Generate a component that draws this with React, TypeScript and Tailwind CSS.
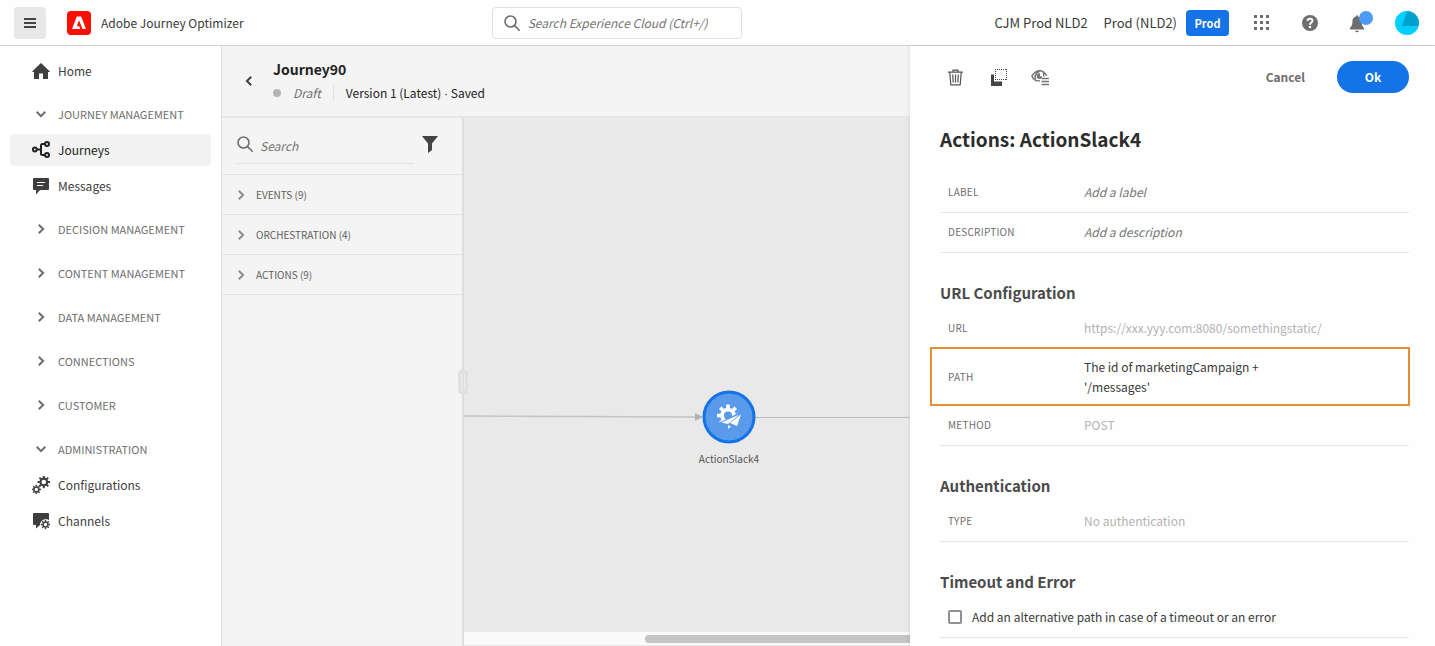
import type { ReactNode } from "react";

type NavItem = { label: string; icon: ReactNode; active?: boolean };
type NavSection = { label: string; open?: boolean; items?: NavItem[] };

const TEETH = [0, 45, 90, 135, 180, 225, 270, 315];

function Gear({ x, y, r, color = "currentColor" }: { x: number; y: number; r: number; color?: string }) {
  return (
    <g transform={`translate(${x} ${y})`}>
      <circle r={r * 0.54} fill="none" stroke={color} strokeWidth={r * 0.34} />
      {TEETH.map((a) => (
        <rect key={a} x={-r * 0.16} y={-r} width={r * 0.32} height={r * 0.36} fill={color} transform={`rotate(${a})`} />
      ))}
    </g>
  );
}

function HomeIcon() {
  return (
    <svg width="18" height="18" viewBox="0 0 18 18" fill="currentColor" aria-hidden="true">
      <path d="M9 1 0.400 9.300c-.3.4-.1.7.3.7H2v6.400c0 .3.2.6.6.6H7v-5.500h4V17h4.400c.4 0 .6-.3.6-.6V10h1.300c.4 0 .6-.3.3-.7Z" />
    </svg>
  );
}

function JourneysIcon() {
  return (
    <svg width="18" height="18" viewBox="0 0 18 18" fill="none" stroke="currentColor" strokeWidth="2" aria-hidden="true">
      <circle cx="2.800" cy="8.500" r="1.900" />
      <circle cx="15" cy="3" r="2" />
      <circle cx="15" cy="14" r="2" />
      <path d="M5 8.500h4M13 3h-2.500Q9 3 9 4.500v8q0 1.500 1.500 1.500H13" />
    </svg>
  );
}

function MessagesIcon() {
  return (
    <svg width="18" height="18" viewBox="0 0 18 18" aria-hidden="true">
      <path fill="currentColor" d="M2 1h14a1 1 0 0 1 1 1v10a1 1 0 0 1-1 1H8l-4 4.500V13H2a1 1 0 0 1-1-1V2a1 1 0 0 1 1-1Z" />
      <path stroke="#fff" d="M5 5.500h8M5 8.500h6" />
    </svg>
  );
}

function GearsIcon() {
  return (
    <svg width="18" height="18" viewBox="0 0 18 18" aria-hidden="true">
      <Gear x={11.8} y={6} r={6.2} />
      <Gear x={4.4} y={13.4} r={4.6} />
    </svg>
  );
}

function ChannelsIcon() {
  return (
    <svg width="18" height="18" viewBox="0 0 18 18" aria-hidden="true">
      <path fill="currentColor" d="M2 1h14a1 1 0 0 1 1 1v6A6 6 0 0 0 8 13l-4 3.600V13H2a1 1 0 0 1-1-1V2a1 1 0 0 1 1-1Z" />
      <circle cx="13.500" cy="12.500" r="5" fill="#fff" />
      <Gear x={13.5} y={12.5} r={4.6} />
    </svg>
  );
}

function Chevron({ dir }: { dir: "down" | "right" | "left" }) {
  const d = { down: "M.7 2.800 5 7.100l4.300-4.300", right: "M2.800.7 7.100 5 2.800 9.300", left: "M7.200.7 2.900 5l4.300 4.300" }[dir];
  return (
    <svg width="10" height="10" viewBox="0 0 10 10" fill="none" stroke="currentColor" strokeWidth="2" aria-hidden="true">
      <path d={d} />
    </svg>
  );
}

function SearchIcon() {
  return (
    <svg width="16" height="16" viewBox="0 0 16 16" fill="none" stroke="currentColor" strokeWidth="1.600" strokeLinecap="round" aria-hidden="true">
      <circle cx="6.500" cy="6.500" r="5.500" />
      <path d="m10.600 10.600 4.600 4.600" />
    </svg>
  );
}

const sections: NavSection[] = [
  {
    label: "JOURNEY MANAGEMENT",
    open: true,
    items: [
      { label: "Journeys", icon: <JourneysIcon />, active: true },
      { label: "Messages", icon: <MessagesIcon /> },
    ],
  },
  { label: "DECISION MANAGEMENT" },
  { label: "CONTENT MANAGEMENT" },
  { label: "DATA MANAGEMENT" },
  { label: "CONNECTIONS" },
  { label: "CUSTOMER" },
  {
    label: "ADMINISTRATION",
    open: true,
    items: [
      { label: "Configurations", icon: <GearsIcon /> },
      { label: "Channels", icon: <ChannelsIcon /> },
    ],
  },
];

function NavLink({ label, icon, active }: NavItem) {
  return (
    <a
      href="#"
      aria-current={active ? "page" : undefined}
      className={
        active
          ? "flex h-8 items-center gap-2 rounded bg-[#f2f2f2] pl-[22px] text-[#222]"
          : "flex h-8 items-center gap-2 rounded pl-[22px] text-[#3e3e3e]"
      }
    >
      {icon}
      {label}
    </a>
  );
}

function TopBar() {
  return (
    <header className="flex h-[46px] shrink-0 items-center border-b border-[#cfcfcf] bg-[#fefefe] pl-3.5 pr-4">
      <div className="flex w-[34%] items-center">
        <button type="button" aria-label="Menu" className="flex size-8 items-center justify-center rounded bg-[#e8e8e8]">
          <svg width="12" height="10" viewBox="0 0 12 10" fill="#444" aria-hidden="true">
            <path d="M0 0h12v2H0zM0 4h12v2H0zM0 8h12v2H0z" />
          </svg>
        </button>
        <svg className="ml-[21px]" width="24" height="24" viewBox="0 0 24 24" aria-hidden="true">
          <rect width="24" height="24" rx="4" fill="#fa0f00" />
          <path fill="#fff" d="M9.800 5.500h4.400L19 18h-3.500L12 9.300l-2.300 6h2.600l1 2.700H5Z" />
        </svg>
        <span className="ml-2.5">Adobe Journey Optimizer</span>
      </div>
      <label className="flex h-8 w-[250px] items-center gap-2 rounded border border-[#e1e1e1] px-[11px] text-[#6e6e6e]">
        <SearchIcon />
        <input
          type="search"
          aria-label="Search Experience Cloud"
          placeholder="Search Experience Cloud (Ctrl+/)"
          className="min-w-0 flex-1 bg-transparent italic outline-none placeholder:text-[#757575]"
        />
      </label>
      <div className="flex flex-1 items-center justify-end">
        <span className="text-[13px]">CJM Prod NLD2</span>
        <span className="ml-4 text-[13px]">Prod (NLD2)</span>
        <button type="button" className="ml-[9px] h-[26px] w-[43px] rounded bg-[#1473e6] text-[11px] font-bold text-white">
          Prod
        </button>
        <button type="button" aria-label="Apps" className="ml-[25px]">
          <svg width="15" height="15" viewBox="0 0 15 15" fill="#6e6e6e" aria-hidden="true">
            {[0, 6, 12].map((y) => [0, 6, 12].map((x) => <rect key={`${x}-${y}`} x={x} y={y} width="3" height="3" />))}
          </svg>
        </button>
        <button type="button" aria-label="Help" className="ml-[33px]">
          <svg width="16" height="16" viewBox="0 0 16 16" aria-hidden="true">
            <circle cx="8" cy="8" r="8" fill="#6e6e6e" />
            <path d="M5.500 5.900Q5.600 3.800 8 3.800t2.500 2Q10.500 7 9 7.800 8 8.400 8 9.700" fill="none" stroke="#fff" strokeWidth="2" />
            <circle cx="8" cy="12" r="1.300" fill="#fff" />
          </svg>
        </button>
        <button type="button" aria-label="Notifications" className="ml-[31px]">
          <svg width="25" height="24" viewBox="0 0 25 24" aria-hidden="true">
            <path fill="#6e6e6e" d="M7 5.500q0-1.300 1-1.300t1 1.300c2.500.5 3.600 2.600 3.600 5.100 0 3.400.6 4.600 2.400 6.400V18.500H1V17c1.800-1.800 2.400-3 2.400-6.400C3.400 8.100 4.500 6 7 5.500ZM6 19.700h4q-.3 1.600-2 1.600t-2-1.600Z" />
            <circle cx="17" cy="7" r="7" fill="#4b9cf5" />
          </svg>
        </button>
        <button type="button" aria-label="Account" className="ml-[21px]">
          <svg width="24" height="24" viewBox="0 0 24 24" aria-hidden="true">
            <circle cx="12" cy="12" r="12" fill="#00cfff" />
            <path fill="#00a0cc" d="M12.500 0A12 12 0 0 1 23.500 15L7 15Z" />
          </svg>
        </button>
      </div>
    </header>
  );
}

function Sidebar() {
  return (
    <nav className="flex w-[222px] shrink-0 flex-col gap-2.5 border-r border-[#e1e1e1] bg-white px-2.5 pt-[9px]">
      <NavLink label="Home" icon={<HomeIcon />} />
      {sections.map((s) => (
        <div key={s.label}>
          <button type="button" aria-expanded={!!s.open} className="flex h-[34px] w-full items-center gap-3 pl-[26px] text-[11px] text-[#6e6e6e]">
            <Chevron dir={s.open ? "down" : "right"} />
            {s.label}
          </button>
          {s.items && (
            <div className="mt-[3px] flex flex-col gap-1">
              {s.items.map((i) => (
                <NavLink key={i.label} {...i} />
              ))}
            </div>
          )}
        </div>
      ))}
    </nav>
  );
}

function Palette() {
  return (
    <aside className="relative w-[242px] shrink-0 border-r-2 border-[#dedede] bg-[#f4f4f4]">
      <div className="flex h-[57px] items-start border-b border-[#e1e1e1] pl-[15px] pr-6 pt-[17px]">
        <label className="flex h-[29px] w-[177px] items-start gap-[7px] border-b border-[#e1e1e1] pt-px text-[#6e6e6e]">
          <SearchIcon />
          <input
            type="search"
            aria-label="Search activities"
            placeholder="Search"
            className="h-5 min-w-0 flex-1 bg-transparent italic outline-none placeholder:text-[#757575]"
          />
        </label>
        <button type="button" aria-label="Filter" className="ml-2 pt-px">
          <svg width="16" height="17" viewBox="0 0 16 17" fill="#444" aria-hidden="true">
            <path d="M.6 0h14.800q.6 0 .3.600L10 7.500V14l-3.500 2.800q-.5.200-.5-.4V7.500L.3.600Q0 0 .6 0Z" />
          </svg>
        </button>
      </div>
      {["EVENTS (9)", "ORCHESTRATION (4)", "ACTIONS (9)"].map((t) => (
        <button key={t} type="button" className="flex h-10 w-full items-center gap-2.5 border-b border-[#e1e1e1] pl-3.5 text-[10px] text-[#5c5c5c]">
          <span className="text-[#8e8e8e]">
            <Chevron dir="right" />
          </span>
          {t}
        </button>
      ))}
      <div className="absolute -right-[6px] top-[252px] z-10 flex h-6 w-2.5 justify-center gap-0.5 rounded-sm bg-[#e0e0e0] py-1">
        <span className="w-px bg-[#ececec]" />
        <span className="w-px bg-[#ececec]" />
      </div>
    </aside>
  );
}

function Canvas() {
  return (
    <div className="flex min-w-0 flex-1 flex-col bg-[#e9e9e9]">
      <div className="relative flex-1 overflow-hidden">
        <svg className="absolute left-0 top-[290px]" width="239" height="16" viewBox="0 0 239 16" aria-hidden="true">
          <path d="M0 8 232 9" stroke="#c4c4c4" strokeWidth="1.500" />
          <path d="M231 5v8l8-4Z" fill="#b3b3b3" />
        </svg>
        <div className="absolute left-[291px] right-0 top-[299px] h-px bg-[#bcbcbc]" />
        <div className="absolute left-[225px] top-[272px] flex w-20 flex-col items-center">
          <svg width="54" height="54" viewBox="0 0 54 54" aria-hidden="true">
            <circle cx="27" cy="27" r="25" fill="#5a9aeb" stroke="#1473e6" strokeWidth="3" />
            <Gear x={26} y={25.5} r={11} color="#fff" />
            <path d="M18 33.500 39.500 22.500 34.500 38 28 34.500 24 41 20 38Z" fill="#5a9aeb" stroke="#5a9aeb" strokeWidth="2" />
            <path d="m19.500 32.500 18-8L26 34Z" fill="#fff" />
            <path d="M39 24.500 35 36l-7-3Z" fill="#fff" />
            <path d="M26 35 29 36.500 26 39Z" fill="#fff" />
          </svg>
          <span className="mt-[7px] text-[10px] leading-4 text-[#555]">ActionSlack4</span>
        </div>
      </div>
      <div className="flex h-3.5 items-center border-b border-[#e9e9e9] bg-[#fafafa] pl-[181px]">
        <div className="h-2 flex-1 rounded-l-full bg-[#c4c4c4]" />
      </div>
    </div>
  );
}

function JourneyHeader() {
  return (
    <div className="flex h-[72px] shrink-0 items-center gap-[19px] border-b-2 border-[#e6e6e6] bg-[#f4f4f4] pl-[22px]">
      <button type="button" aria-label="Back" className="text-[#444]">
        <Chevron dir="left" />
      </button>
      <div>
        <h1 className="text-sm font-bold leading-6 text-[#222]">Journey90</h1>
        <div className="flex h-6 items-center">
          <span className="size-2 rounded-full bg-[#b3b3b3]" />
          <span className="ml-3 italic text-[#6e6e6e]">Draft</span>
          <span className="ml-3 h-4 border-l border-[#e1e1e1]" />
          <span className="ml-3 text-[#222]">
            Version 1 (Latest) <span className="font-['Liberation_Sans',sans-serif]">·</span> Saved
          </span>
        </div>
      </div>
    </div>
  );
}

function Row({ label, children, kind = "line" }: { label: string; children: ReactNode; kind?: "line" | "plain" | "boxed" }) {
  const cls = {
    line: "flex h-10 items-center border-b border-[#e6e6e6] pb-px pl-2",
    plain: "flex h-[38px] items-center pl-2",
    boxed: "-ml-2.5 -mr-px flex h-[59px] items-center border-2 border-[#e68d32] pl-4",
  }[kind];
  return (
    <div className={cls}>
      <span className="w-[136px] shrink-0 text-[10px] tracking-wide text-[#6e6e6e]">{label}</span>
      {children}
    </div>
  );
}

function TextField({ label, placeholder }: { label: string; placeholder: string }) {
  return (
    <label className="flex h-10 items-center border-b border-[#e6e6e6] pb-px pl-2">
      <span className="w-[136px] shrink-0 text-[10px] tracking-wide text-[#6e6e6e]">{label}</span>
      <input type="text" placeholder={placeholder} className="min-w-0 flex-1 bg-transparent italic outline-none placeholder:text-[#757575]" />
    </label>
  );
}

function PanelHeading({ children }: { children: ReactNode }) {
  return <h3 className="mb-1 mt-7 text-[15px] font-bold leading-6 text-[#4b4b4b]">{children}</h3>;
}

function ActionPanel() {
  return (
    <section className="w-[525px] shrink-0 bg-[#fefefe] pb-2 pl-[30px] pr-[26px] pt-[15px] shadow-[-1px_0_3px_rgba(0,0,0,0.08)]">
      <div className="flex h-8 items-center pl-[7px]">
        <button type="button" aria-label="Delete" className="text-[#555]">
          <svg width="17" height="17" viewBox="0 0 17 17" fill="none" stroke="currentColor" strokeWidth="1.200" aria-hidden="true">
            <path d="M1 3.200h15M6 3V1.200h5V3M2.800 3.500l1 12.300h9.400l1-12.300M5.700 5.500l.5 8M8.500 5.500v8M11.300 5.500l-.5 8" />
          </svg>
        </button>
        <button type="button" aria-label="Copy" className="ml-[26px] text-[#444]">
          <svg width="17" height="17" viewBox="0 0 17 17" aria-hidden="true">
            <path d="M1 5.500h3v7h8V17H1Z" fill="currentColor" />
            <path d="M5 1.500h12M5 11.500h12" fill="none" stroke="currentColor" strokeDasharray="1 1" transform="translate(0 -1)" />
            <path d="M5.500 0v11M16.500 0v11" fill="none" stroke="currentColor" strokeDasharray="1 1" />
          </svg>
        </button>
        <button type="button" aria-label="Show read-only fields" className="ml-6 text-[#777]">
          <svg width="18" height="17" viewBox="0 0 18 17" fill="none" stroke="currentColor" strokeWidth="1.500" aria-hidden="true">
            <path d="M9 11.700C5 12.500 2 10 .900 7 3 3.500 5.500 1.700 8.500 1.700c3 0 5.500 1.800 7.300 5.300M4.600 10.500C3 7 5 3.500 8.500 2.300M12 3.500c1 1 1 2.500.500 4" />
            <path d="M9 4.200a2.900 2.900 0 1 0 2.300 3.800L9 6.800Z" fill="currentColor" stroke="none" />
            <path d="M10.500 9.500H18M10.500 12.500H18M10.500 15.500H18" />
          </svg>
        </button>
        <button type="button" className="ml-auto font-bold text-[#6e6e6e]">
          Cancel
        </button>
        <button type="button" className="ml-8 h-8 w-[72px] rounded-full bg-[#1473e6] font-bold text-white">
          Ok
        </button>
      </div>
      <h2 className="mb-5 mt-8 text-[19px] font-bold leading-7 text-[#2c2c2c]">Actions: ActionSlack4</h2>
      <TextField label="LABEL" placeholder="Add a label" />
      <TextField label="DESCRIPTION" placeholder="Add a description" />
      <PanelHeading>URL Configuration</PanelHeading>
      <Row label="URL" kind="plain">
        <span className="text-[#b3b3b3]">https://xxx.yyy.com:8080/somethingstatic/</span>
      </Row>
      <Row label="PATH" kind="boxed">
        <span className="w-[200px] leading-5">The id of marketingCampaign + '/messages'</span>
      </Row>
      <Row label="METHOD">
        <span className="text-[#b3b3b3]">POST</span>
      </Row>
      <PanelHeading>Authentication</PanelHeading>
      <Row label="TYPE">
        <span className="text-[#b3b3b3]">No authentication</span>
      </Row>
      <PanelHeading>Timeout and Error</PanelHeading>
      <label className="flex h-10 items-center gap-2.5 border-b border-[#e6e6e6] pb-px pl-2">
        <input type="checkbox" className="size-3.5 appearance-none rounded-xs border-2 border-[#909090] bg-white checked:bg-[#1473e6]" />
        Add an alternative path in case of a timeout or an error
      </label>
    </section>
  );
}

export default function App() {
  return (
    <div className="flex min-h-screen flex-col bg-white font-['Noto_Sans_CJK_SC',sans-serif] text-xs leading-5 text-[#3a3a3a]">
      <TopBar />
      <div className="flex flex-1">
        <Sidebar />
        <main className="flex min-w-0 flex-1 flex-col">
          <JourneyHeader />
          <div className="flex flex-1">
            <Palette />
            <Canvas />
          </div>
        </main>
        <ActionPanel />
      </div>
    </div>
  );
}
